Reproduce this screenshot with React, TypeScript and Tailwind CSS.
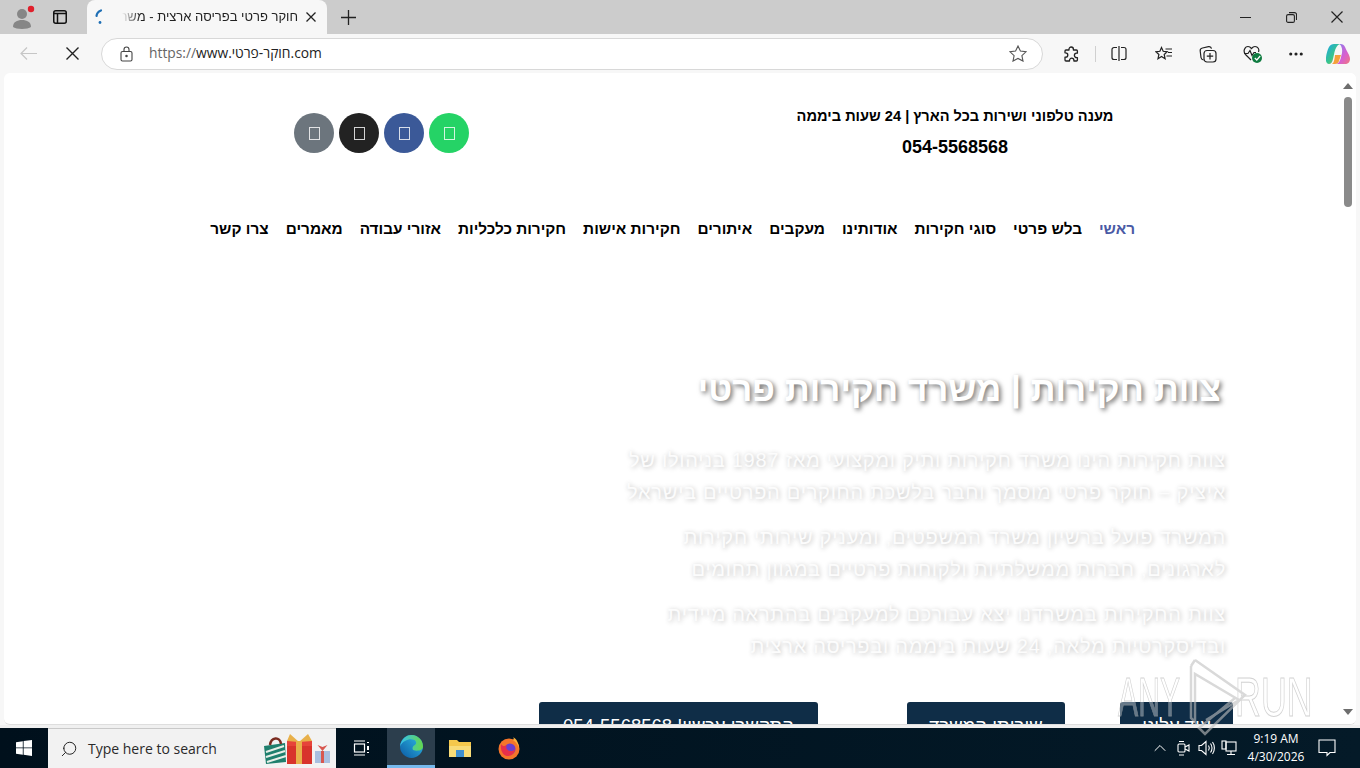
import React from "react";
import { Search, ChevronUp, MoreHorizontal } from "lucide-react";

const nav = ["ראשי", "בלש פרטי", "סוגי חקירות", "אודותינו", "מעקבים", "איתורים", "חקירות אישות", "חקירות כלכליות", "אזורי עבודה", "מאמרים", "צרו קשר"];

function Social({ bg }: { bg: string }) {
  return (
    <div className={`w-10 h-10 rounded-full flex items-center justify-center ${bg}`}>
      <div className="w-[11px] h-[13px] border border-white/80" />
    </div>
  );
}

function Btn({ w, text }: { w: string; text: string }) {
  return (
    <div className={`${w} h-[40px] shrink-0 rounded-t-[3px] bg-[#0f2d47] text-white text-[18.5px] flex justify-center pt-[10px] whitespace-nowrap`}>{text}</div>
  );
}

function Cross({ size, stroke = "#222", w = 1.2 }: { size: number; stroke?: string; w?: number }) {
  return (
    <svg width={size} height={size} viewBox={`0 0 ${size} ${size}`} fill="none" stroke={stroke} strokeWidth={w}>
      <path d={`M0.5 0.5L${size - 0.5} ${size - 0.5}M${size - 0.5} 0.5L0.5 ${size - 0.5}`} />
    </svg>
  );
}

export default function App() {
  return (
    <div className="w-[1360px] h-[768px] overflow-hidden relative flex flex-col bg-[#f7f7f7] font-['Liberation_Sans',sans-serif]">
      {/* tab strip */}
      <div className="h-[34px] bg-[#cccccc] flex items-end shrink-0">
        <div className="w-[87px] h-[34px] relative flex items-center">
          <svg className="absolute left-[12px] top-[4px]" width="24" height="26" viewBox="0 0 24 26">
            <circle cx="10" cy="10" r="5" fill="#868686" />
            <path d="M1 23c0-5 4-7 9-7s9 2 9 7c-3 2.500-15 2.500-18 0z" fill="#868686" />
            <circle cx="19" cy="5" r="3.200" fill="#e0202c" />
          </svg>
          <svg className="absolute left-[53px] top-[10px]" width="14" height="14" viewBox="0 0 14 14" fill="none" stroke="#111" strokeWidth="1.500">
            <rect x="0.750" y="0.750" width="12.500" height="12.500" rx="2" />
            <path d="M0.750 3.500h12.500M4.500 3.500v9.750" />
          </svg>
        </div>
        <div className="w-[240px] h-[34px] bg-[#f7f7f7] rounded-t-[8px] relative">
          <svg className="absolute left-[5px] top-[8px]" width="14" height="18" viewBox="0 0 14 18" fill="none" strokeLinecap="round">
            <path d="M9 2.500C6.500 3.500 4.800 5.500 4.500 8" stroke="#1f6fb5" strokeWidth="2.200" />
            <circle cx="8" cy="14.500" r="1.400" fill="#1f6fb5" />
          </svg>
          <div dir="rtl" className="absolute left-[35px] top-[9px] w-[176px] overflow-hidden whitespace-nowrap text-[13px] leading-[16px] text-[#222] text-right [mask-image:linear-gradient(to_right,transparent,black_18px)]">חוקר פרטי בפריסה ארצית - משרד</div>
          <div className="absolute left-[219px] top-[12px]"><Cross size={10} w={1.300} /></div>
        </div>
        <div className="h-[34px] flex items-center pl-[14px] flex-1">
          <svg width="15" height="15" viewBox="0 0 15 15" stroke="#222" strokeWidth="1.300"><path d="M7.500 0v15M0 7.500h15" /></svg>
        </div>
        <div className="h-[34px] flex items-center">
          <div className="w-[46px] flex justify-center"><div className="w-[11px] h-px bg-[#222]" /></div>
          <div className="w-[46px] flex justify-center">
            <svg width="11" height="11" viewBox="0 0 11 11" fill="none" stroke="#222" strokeWidth="1.100">
              <rect x="0.600" y="2.600" width="7.800" height="7.800" rx="1.500" />
              <path d="M3 .6h5.500a2 2 0 0 1 2 2V8" />
            </svg>
          </div>
          <div className="w-[46px] flex justify-center"><Cross size={12} w={1.200} /></div>
        </div>
      </div>

      {/* toolbar */}
      <div className="h-[39px] bg-[#f7f7f7] flex items-center shrink-0">
        <div className="w-[56px] flex justify-center">
          <svg width="17" height="13" viewBox="0 0 17 13" fill="none" stroke="#c6c6c6" strokeWidth="1.200"><path d="M17 6.500H1M7 .5L1 6.500l6 6" /></svg>
        </div>
        <div className="w-[32px] flex justify-center"><Cross size={13} w={1.400} /></div>
        <div className="ml-[13px] w-[942px] h-[32px] rounded-full bg-white border border-[#d8d8d8] flex items-center pl-[18px] pr-[15px]">
          <svg width="13" height="16" viewBox="0 0 13 16" fill="none" stroke="#444" strokeWidth="1.100">
            <rect x="1" y="5.500" width="11" height="9.500" rx="1.500" />
            <path d="M4 5.500V3.500a2.500 2.500 0 0 1 5 0v2" />
            <circle cx="6.500" cy="10" r="0.700" fill="#444" />
          </svg>
          <div className="ml-[16px] text-[13.8px] flex-1 text-[#222] font-['Open_Sans','Liberation_Sans',sans-serif]" dir="ltr">
            <span className="text-[#666]">https://</span>www.חוקר-פרטי.com
          </div>
          <svg width="18" height="17" viewBox="0 0 18 17" fill="none" stroke="#555" strokeWidth="1.100">
            <path d="M9 1l2.400 5.100 5.600.7-4.100 3.800 1.100 5.500L9 13.400 4 16.100l1.100-5.500L1 6.800l5.600-.7z" />
          </svg>
        </div>
        <div className="flex items-center ml-[6px]">
          <div className="w-[44px] flex justify-center">
            <svg width="16" height="16" viewBox="0 0 16 16" fill="none" stroke="#222" strokeWidth="1.300" strokeLinejoin="round">
              <path d="M6 3.200a2.200 2.200 0 0 1 4.400 0V4h3c.6 0 1 .4 1 1v2.200h-.8a2.200 2.200 0 0 0 0 4.400h.8V14c0 .6-.4 1-1 1h-2.500v-.6a2.200 2.200 0 0 0-4.400 0v.6H3c-.6 0-1-.4-1-1v-2.800h.6a2.200 2.200 0 0 0 0-4.400H2V5c0-.6.4-1 1-1h3z" />
            </svg>
          </div>
          <div className="w-px h-[16px] bg-[#d0d0d0] ml-[2px]" />
          <div className="w-[44px] ml-[1px] flex justify-center">
            <svg width="16" height="15" viewBox="0 0 16 15" fill="none" stroke="#222" strokeWidth="1.200">
              <path d="M6 1.500H3a2 2 0 0 0-2 2v8a2 2 0 0 0 2 2h3M10 1.500h3a2 2 0 0 1 2 2v8a2 2 0 0 1-2 2h-3M8 0v15" />
            </svg>
          </div>
          <div className="w-[44px] ml-[1px] flex justify-center">
            <svg width="18" height="16" viewBox="0 0 18 16" fill="none" stroke="#222" strokeWidth="1.200">
              <path d="M6.500 1.500l1.700 3.800 4 .5-3 2.700.9 4.200-3.600-2.200L3 12.700l.9-4.200-3-2.700 4-.5z" />
              <path d="M10.500 3h6.500M13 6.500h4M11.500 10H17" />
            </svg>
          </div>
          <div className="w-[44px] flex justify-center">
            <svg width="18" height="18" viewBox="0 0 18 18" fill="none" stroke="#222" strokeWidth="1.200">
              <path d="M4.500 15C3 14.700 2.200 14 2 12.500L1.200 6C1 4.500 2 3.300 3.500 3L9.500 1.700c1.500-.3 2.700.5 3 2" />
              <rect x="5" y="5.500" width="12" height="11.500" rx="3" />
              <path d="M11 8v6.500M7.800 11.200h6.400" />
            </svg>
          </div>
          <div className="w-[44px] flex justify-center">
            <div className="relative w-[18px] h-[17px]">
              <svg width="18" height="17" viewBox="0 0 18 17" fill="none" stroke="#222" strokeWidth="1.200">
                <path d="M8 15L2.500 9.500C-.5 6 2 1.500 5 1.500c1.500 0 2.500.8 3.500 2 1-1.200 2-2 3.500-2 3 0 4.500 3 3.500 5.500" />
                <path d="M1 8.500h4l2-3 2 5 2-3h2" />
              </svg>
              <div className="absolute left-[9px] top-[8px] w-[10px] h-[10px] rounded-full bg-[#107c41] flex items-center justify-center">
                <svg width="7" height="6" viewBox="0 0 7 6" fill="none" stroke="#fff" strokeWidth="1.200"><path d="M.8 3l2 2L6.200 1" /></svg>
              </div>
            </div>
          </div>
          <div className="w-[44px] flex justify-center"><MoreHorizontal size={18} strokeWidth={2.200} color="#222" /></div>
          <div className="w-[40px] flex justify-center">
            <svg width="24" height="22" viewBox="0 0 24 22">
              <defs>
                <linearGradient id="cp1" x1="0" y1="0" x2="1" y2="1"><stop offset="0" stopColor="#1ba6e8" /><stop offset="0.550" stopColor="#39c58a" /><stop offset="1" stopColor="#f5b52a" /></linearGradient>
                <linearGradient id="cp2" x1="0" y1="0" x2="1" y2="1"><stop offset="0" stopColor="#7d7cf0" /><stop offset="0.600" stopColor="#d860d0" /><stop offset="1" stopColor="#f0787a" /></linearGradient>
              </defs>
              <path d="M8 1h6c-3 1-4.500 4-5.500 8L7 16c-.5 3-2 5-4 5-1.500 0-2.500-1-3-3-.5-4 1-10 3-14 1-2 3-3 5-3z" fill="url(#cp1)" />
              <path d="M13 1c3-.5 5 .5 6 3 2 5 5 8 5 12 0 3-2 5-5 5h-9c2-.5 3.500-2 4.500-5l1.500-6c.5-3 0-7-2.500-9z" fill="url(#cp2)" />
              <path d="M9 12h6l-2 6c-.6 1.800-2 3-4 3H6c1.500-1 2.300-2.500 3-9z" fill="#f5a03a" />
            </svg>
          </div>
        </div>
      </div>

      {/* page */}
      <div className="h-[652px] mx-[4px] bg-white rounded-[6px] border-b border-[#dedede] shrink-0 overflow-hidden flex">
        <div dir="rtl" className="flex-1 min-w-0 overflow-hidden">
          {/* top bar */}
          <div className="h-[121px] flex items-start">
            <div className="mr-[225px] w-[320px] mt-[35px] text-center text-black font-bold">
              <div className="text-[14.6px] leading-[17px]">מענה טלפוני ושירות בכל הארץ | 24 שעות ביממה</div>
              <div className="text-[18px] leading-[21px] mt-[12px]">054-5568568</div>
            </div>
            <div className="mr-[326px] mt-[40px] flex gap-[5px]">
              <Social bg="bg-[#25d366]" />
              <Social bg="bg-[#3b5998]" />
              <Social bg="bg-[#222222]" />
              <Social bg="bg-[#6c757d]" />
            </div>
          </div>
          {/* nav */}
          <nav className="mt-[25px] h-[20px] flex gap-[17px] mr-[205px] text-[15.36px] font-bold text-black leading-[20px] whitespace-nowrap">
            {nav.map((n, i) => (
              <span key={n} className={i === 0 ? "text-[#4a5aa5]" : ""}>{n}</span>
            ))}
          </nav>
          {/* hero */}
          <div className="mt-[127px] text-white whitespace-nowrap">
            <h1 className="mr-[119px] text-[34.9px] leading-[46px] font-bold [text-shadow:2px_2px_5px_rgba(0,0,0,0.6)]">צוות חקירות | משרד חקירות פרטי</h1>
            <div className="mr-[114px] mt-[32px] text-[20px] leading-[32px] tracking-[0.75px] text-[#fcfcfc] [text-shadow:1px_1px_5px_rgba(0,0,0,0.28)]">
              <p>צוות חקירות הינו משרד חקירות ותיק ומקצועי מאז 1987 בניהולו של</p>
              <p>איציק – חוקר פרטי מוסמך וחבר בלשכת החוקרים הפרטיים בישראל</p>
              <p className="mt-[13px]">המשרד פועל ברשיון משרד המשפטים, ומעניק שירותי חקירות</p>
              <p>לארגונים, חברות ממשלתיות ולקוחות פרטיים במגוון תחומים</p>
              <p className="mt-[13px]">צוות החקירות במשרדנו יצא עבורכם למעקבים בהתראה מיידית</p>
              <p>ובדיסקרטיות מלאה, 24 שעות ביממה ובפריסה ארצית</p>
            </div>
            <div className="mr-[107px] mt-[40px] flex">
              <Btn w="w-[113px]" text="עוד עלינו" />
              <div className="w-[55px] shrink-0" />
              <Btn w="w-[158px]" text="שירותי המשרד" />
              <div className="w-[89px] shrink-0" />
              <Btn w="w-[279px]" text="התקשרו עכשיו! 054-5568568" />
            </div>
          </div>
        </div>
        {/* scrollbar */}
        <div className="w-[16px] shrink-0 bg-white flex flex-col items-center">
          <div className="mt-[10px] w-0 h-0 border-x-[5px] border-x-transparent border-b-[6px] border-b-[#6e6e6e]" />
          <div className="mt-[8px] w-[8px] h-[110px] rounded-full bg-[#8a8a8a]" />
          <div className="mt-auto mb-[9px] w-0 h-0 border-x-[5px] border-x-transparent border-t-[6px] border-t-[#6e6e6e]" />
        </div>
      </div>
      <div className="h-[3px] bg-[#f0f0f0] shrink-0" />

      {/* taskbar */}
      <div className="h-[40px] bg-gradient-to-r from-[#00101c] to-[#041a28] flex items-center shrink-0 text-white">
        <div className="w-[48px] flex justify-center">
          <svg width="16" height="16" viewBox="0 0 16 16" fill="#fff"><path d="M0 2.200l6.800-1v6.300H0zM7.600 1.100L16 0v7.500H7.600zM0 8.300h6.800v6.500L0 13.800zM7.600 8.300H16V16l-8.400-1.200z" /></svg>
        </div>
        <div className="w-[288px] h-[40px] bg-[#f2f2f2] flex items-center relative border-t border-[#c9c9c9]">
          <Search size={18} strokeWidth={1.300} color="#222" className="ml-[12px] -scale-x-100" />
          <span className="ml-[10px] text-[14px] text-[#2a2a2a] font-['Open_Sans',sans-serif]">Type here to search</span>
          <svg className="absolute left-[215px] top-[4px]" width="72" height="32" viewBox="0 0 72 32">
            <path d="M1 13l21-3 1 19-20 2z" fill="#1f7f6d" />
            <path d="M3 19l18-6M3 24l19-6M4 29l19-6" stroke="#e8efe8" strokeWidth="2" />
            <path d="M7 12c1-8 10-9 11-1" fill="none" stroke="#7a2b20" strokeWidth="2.500" />
            <rect x="24" y="11" width="25" height="20" fill="#d8332c" />
            <rect x="24" y="8" width="25" height="5" fill="#e6433a" />
            <rect x="33" y="8" width="6" height="23" fill="#e8b04a" />
            <path d="M36 9L27 1l-3 7zM36 9l9-8 4 7z" fill="#e8b04a" />
            <rect x="52" y="18" width="15" height="12" fill="#a9bfe0" />
            <rect x="58" y="18" width="3" height="12" fill="#d8574f" />
            <path d="M59.500 18l-5-6 5 2 5-2z" fill="#d8574f" />
          </svg>
        </div>
        <div className="w-[51px] flex justify-center">
          <svg width="17" height="16" viewBox="0 0 17 16" fill="none" stroke="#fff" strokeWidth="1.200">
            <path d="M1 1h11M1 15h11" />
            <rect x="1.500" y="4" width="10" height="8" />
            <path d="M15 2v1M15 6v4M15 12v1" strokeWidth="2" />
          </svg>
        </div>
        <div className="w-[48px] h-[40px] bg-[#2c3e4d] border-b-[3px] border-[#76b9ed] flex justify-center items-center">
          <svg width="25" height="25" viewBox="0 0 24 24">
            <defs>
              <linearGradient id="ed1" x1="0" y1="1" x2="1" y2="0"><stop offset="0" stopColor="#0c59a4" /><stop offset="1" stopColor="#2fc0e8" /></linearGradient>
              <linearGradient id="ed2" x1="0" y1="0" x2="1" y2="0"><stop offset="0" stopColor="#35c1f1" /><stop offset="1" stopColor="#66d84a" /></linearGradient>
            </defs>
            <circle cx="12" cy="12" r="11" fill="url(#ed1)" />
            <path d="M1 12C2 4 8 1 12 1c6 0 11 5 11 11 0 3-3 4-6 4-2 0-4 0-4-2 0-4 5-3 3-7-2-3-11-3-15 5z" fill="url(#ed2)" />
          </svg>
        </div>
        <div className="w-[49px] flex justify-center">
          <svg width="22" height="20" viewBox="0 0 22 20">
            <path d="M0 2h8l2 2h12v14H0z" fill="#f5c84c" />
            <rect x="0" y="8" width="22" height="11" fill="#f9dc78" />
            <rect x="7" y="12" width="8" height="7" fill="#3f8fd0" />
          </svg>
        </div>
        <div className="w-[49px] flex justify-center">
          <svg width="24" height="24" viewBox="0 0 24 24">
            <circle cx="12" cy="13" r="10.500" fill="#f5752a" />
            <path d="M12 3c4 0 9 4 10 10 0-5-2-10-6-12 1 1 1 2 0 3z" fill="#fbb03b" />
            <circle cx="13" cy="13" r="5.500" fill="#6a3fd0" />
            <path d="M4 8c2 3 4 2 6 1-2 3 0 6 4 6 3 0 4-2 4-2 0 4-3 7-7 7s-8-4-7-12z" fill="#e8304a" />
          </svg>
        </div>
        <div className="ml-auto flex items-center">
          <ChevronUp size={20} strokeWidth={1.200} />
          <svg className="ml-[7px]" width="14" height="18" viewBox="0 0 14 18" fill="none" stroke="#fff" strokeWidth="1.100">
            <rect x="1" y="5" width="7" height="8" rx="1" />
            <path d="M8 8l4-2v6l-4-2M2 2.500h5M2 16h5" />
          </svg>
          <svg className="ml-[7px]" width="17" height="16" viewBox="0 0 17 16" fill="none" stroke="#fff" strokeWidth="1.100">
            <path d="M1 5.500h2.500L8 1.500v13l-4.500-4H1zM10.500 5.500c1 1.500 1 3.500 0 5M12.500 3.500c2 2.500 2 6.500 0 9M14.500 2c2.500 3.500 2.500 8.500 0 12" />
          </svg>
          <svg className="ml-[6px]" width="16" height="17" viewBox="0 0 16 17" fill="none" stroke="#fff" strokeWidth="1.100">
            <rect x="5" y="2" width="10" height="9" />
            <rect x="1" y="1" width="4" height="8" />
            <path d="M10 11v3M6 14.500h8" />
          </svg>
          <div className="w-[62px] ml-[8px] text-center text-[12px] leading-[18px] font-['Open_Sans',sans-serif]">
            <div>9:19 AM</div>
            <div>4/30/2026</div>
          </div>
          <svg className="ml-[11px] mr-[24px]" width="18" height="18" viewBox="0 0 18 18" fill="none" stroke="#fff" strokeWidth="1.100">
            <path d="M1 1h16v12.500h-5L9 16.500v-3H1z" />
          </svg>
        </div>
      </div>

      {/* watermark */}
      <div className="absolute left-[1118px] top-[658px] w-[200px] h-[78px] pointer-events-none opacity-60">
        <span className="absolute left-0 top-[0px] leading-[78px] text-[56px] scale-x-[0.54] origin-left text-white/60 [-webkit-text-stroke:1px_#b5b5b5]">ANY</span>
        <span className="absolute left-[117px] top-[0px] leading-[78px] text-[56px] scale-x-[0.64] origin-left text-white/60 [-webkit-text-stroke:1px_#b5b5b5]">RUN</span>
        <svg className="absolute left-[70px] top-0" width="60" height="78" viewBox="0 0 60 78" fill="none" stroke="#c0c0c0" strokeWidth="2.500">
          <path d="M3 8v52l4 4V16l44 26-33 20" />
          <path d="M7 2l50 35-40 39-6-6L47 40" />
          <path d="M3 8l4-6" />
        </svg>
      </div>
    </div>
  );
}
